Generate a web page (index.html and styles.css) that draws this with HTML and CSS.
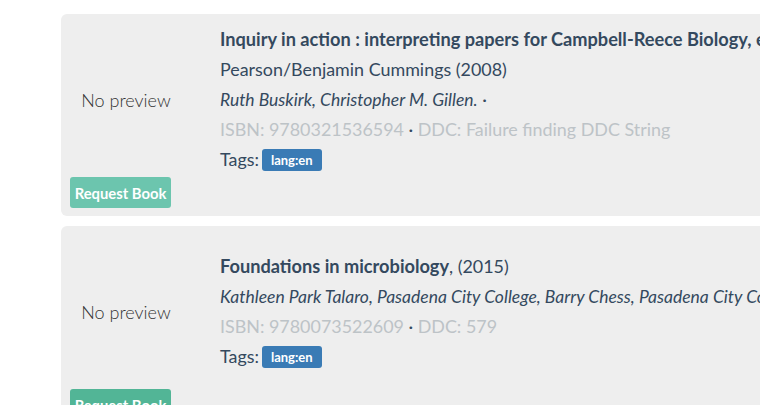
FILE: index.html
```html
<!DOCTYPE html>
<html lang="en">
<head>
<meta charset="utf-8">
<title>Books</title>
<link rel="stylesheet" href="styles.css">
</head>
<body>
<div class="list">
  <div class="card">
    <div class="top">
      <div class="preview">No preview</div>
      <div class="info">
        <div class="line title"><b>Inquiry in action : interpreting papers for Campbell-Reece Biology, eighth edition</b></div>
        <div class="line">Pearson/Benjamin Cummings (2008)</div>
        <div class="line authors"><i>Ruth Buskirk, Christopher M. Gillen.</i> ·</div>
        <div class="line meta"><span class="muted">ISBN: 9780321536594</span> · <span class="muted">DDC: Failure finding DDC String</span></div>
        <div class="line">Tags:<span class="badge">lang:en</span></div>
      </div>
    </div>
    <div class="actions"><button class="btn">Request Book</button></div>
  </div>
  <div class="card">
    <div class="top">
      <div class="preview">No preview</div>
      <div class="info">
        <div class="line title"><b>Foundations in microbiology</b>, (2015)</div>
        <div class="line authors"><i>Kathleen Park Talaro, Pasadena City College, Barry Chess, Pasadena City College.</i> ·</div>
        <div class="line meta"><span class="muted">ISBN: 9780073522609</span> · <span class="muted">DDC: 579</span></div>
        <div class="line">Tags:<span class="badge">lang:en</span></div>
      </div>
    </div>
    <div class="actions"><button class="btn btn-active">Request Book</button></div>
  </div>
</div>
</body>
</html>
```
FILE: styles.css
```css
html, body {
  margin: 0;
  padding: 0;
  background: #fff;
  overflow: hidden;
}
body {
  font-family: Lato, "Open Sans", "Liberation Sans", sans-serif;
  color: #34495e;
  font-size: 17.9px;
}
.list {
  padding: 14px 0 0 61px;
  display: flex;
  flex-direction: column;
  gap: 10px;
  width: 1100px;
}
.card {
  background: #eeeeee;
  border-radius: 6px;
  padding: 9px 9px 8px 9px;
  display: flex;
  flex-direction: column;
}
.top {
  display: flex;
  align-items: center;
  height: 154px;
}
.preview {
  width: 112px;
  text-align: center;
  font-weight: 300;
  font-size: 18px;
  color: #333;
  flex: none;
}
.info {
  margin-left: 38px;
  margin-top: -2px;
  white-space: nowrap;
}
.line {
  line-height: 30px;
  height: 30px;
}
.title b { font-weight: 700; font-size: 18.2px; }
.authors i { font-size: 17.5px; }
.muted { color: #bdc3c7; }
.meta { color: #34495e; }
.badge {
  display: inline-block;
  margin-left: 3px;
  background: #3a7bb5;
  color: #fff;
  font-weight: 700;
  font-size: 13px;
  line-height: 22px;
  height: 22px;
  padding: 0 9px;
  border-radius: 3px;
  vertical-align: 1px;
}
.actions { display: flex; }
.btn {
  font-family: inherit;
  background: #6cc5ae;
  color: #fff;
  border: 0;
  border-radius: 3px;
  font-weight: 700;
  font-size: 14.8px;
  height: 31px;
  width: 101px;
  padding: 0;
  cursor: pointer;
}
.btn-active { background: #52b596; }
```
